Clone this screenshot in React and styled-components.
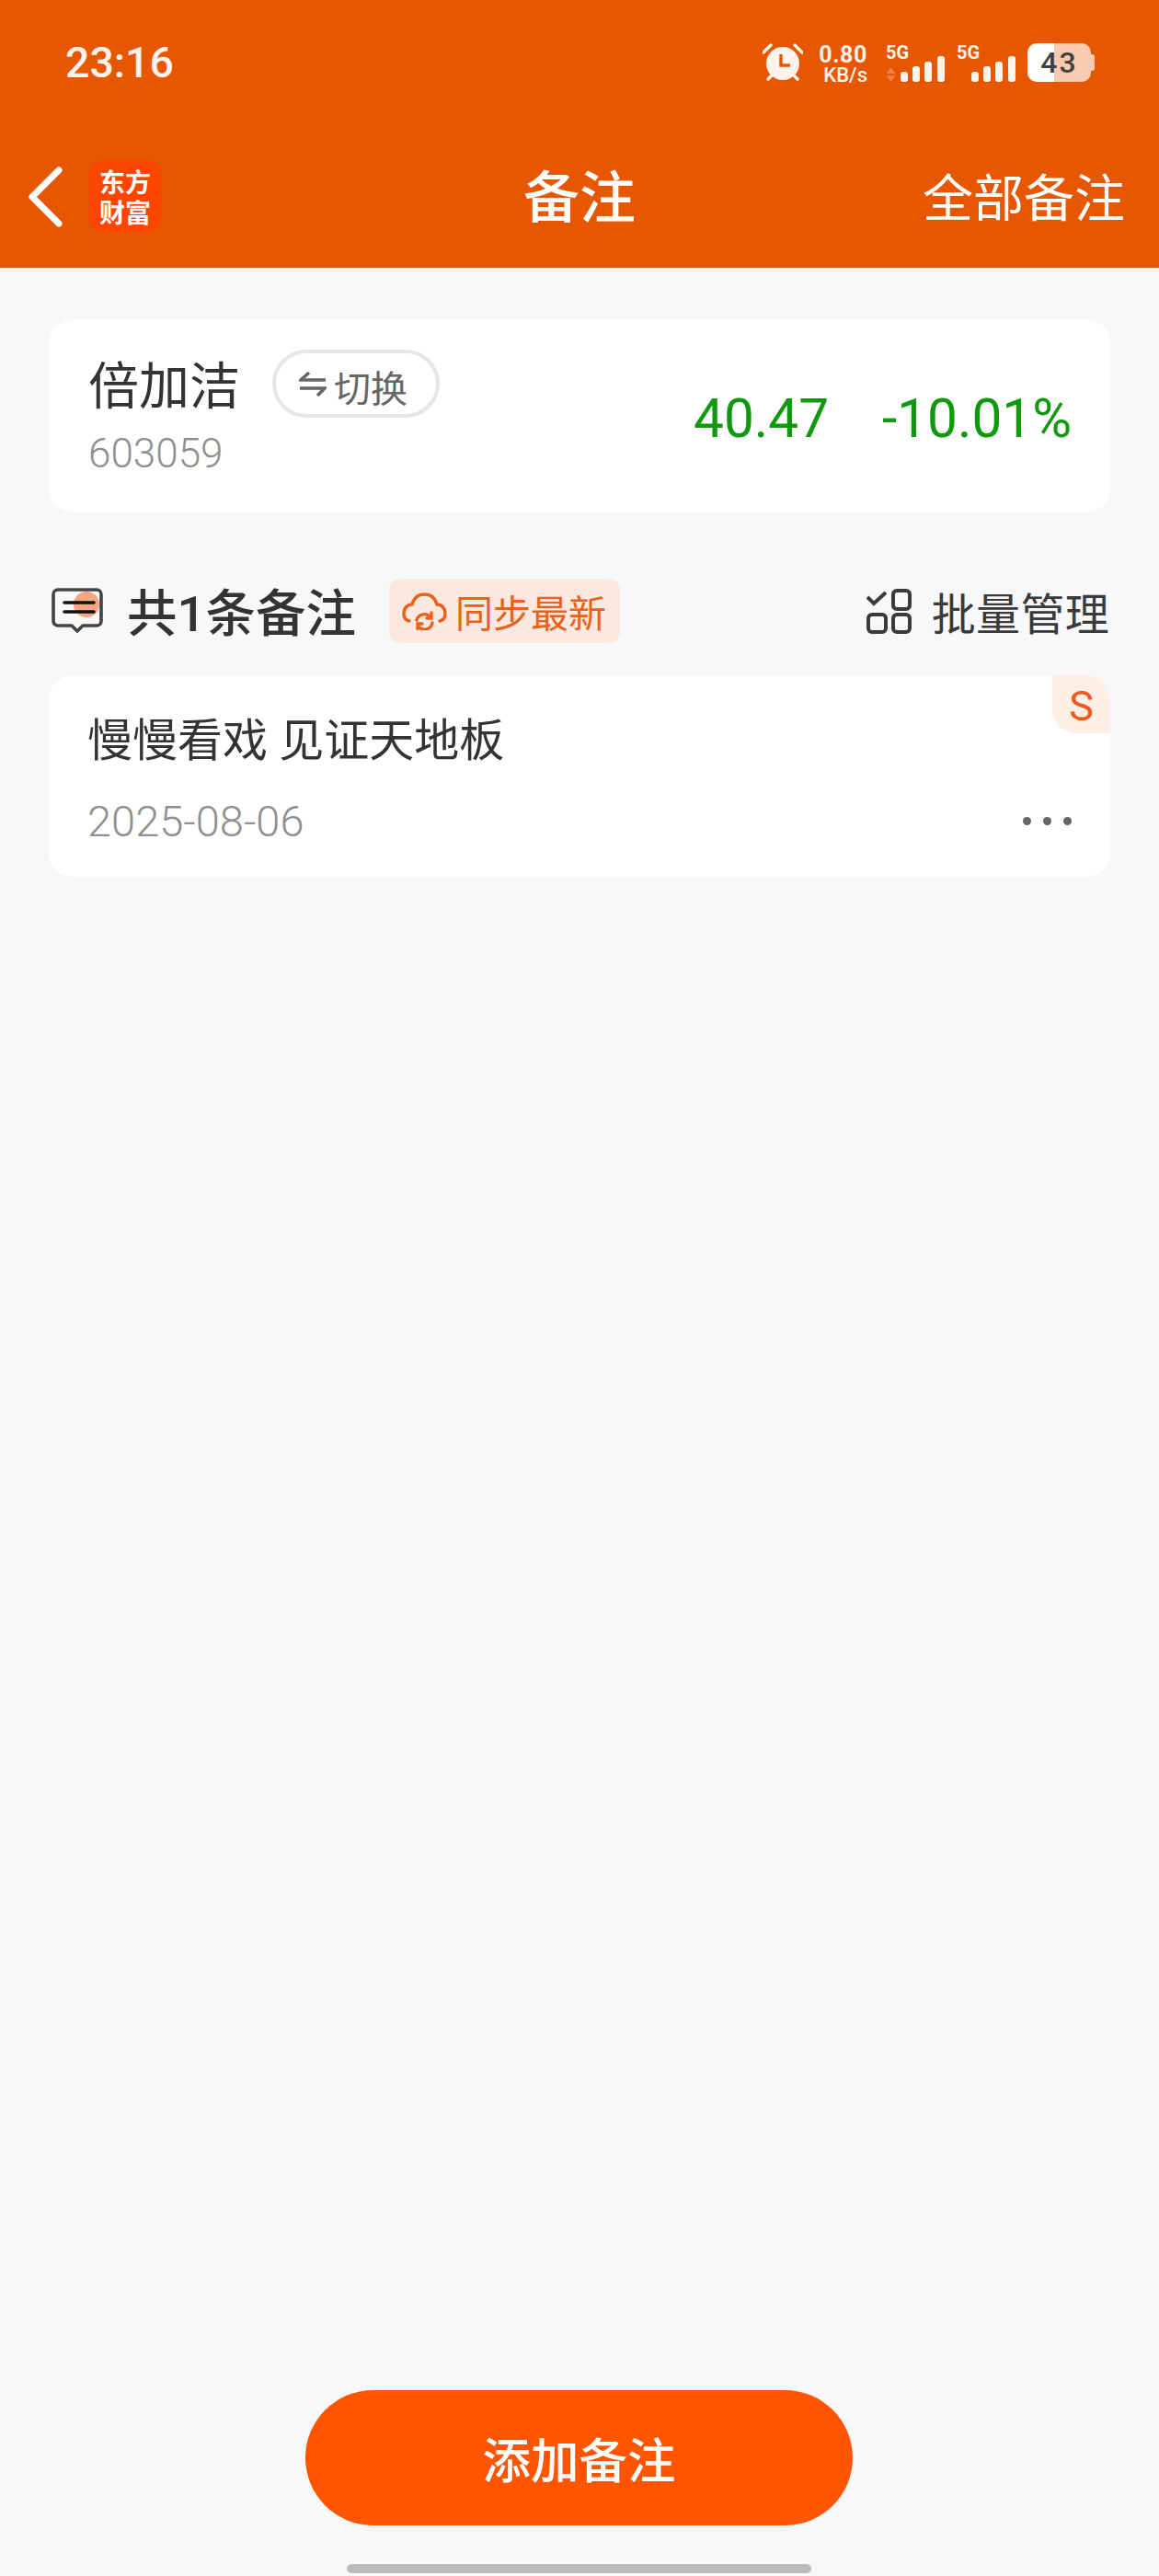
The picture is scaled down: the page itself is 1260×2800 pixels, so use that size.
import React from "react";
import styled, { createGlobalStyle } from "styled-components";

const Global = createGlobalStyle`
  html, body { margin: 0; padding: 0; background: #f8f8fa; }
  * { box-sizing: border-box; }
  body { font-family: Roboto, "Noto Sans CJK SC", sans-serif; }
`;

const Page = styled.div`
  width: 1260px;
  height: 2800px;
  display: flex;
  flex-direction: column;
  background: #f8f8fa;
  color: #333;
`;
const Header = styled.header`
  height: 291px;
  background: #e75600;
  color: #fff;
  flex: none;
`;
const StatusBar = styled.div`
  height: 136px;
  display: flex;
  align-items: center;
  padding: 0 70px 0 71px;
  color: #fff3ec;
`;
const Time = styled.div`
  font-size: 46.5px;
  font-weight: 500;
  line-height: 1;
`;
const StatusIcons = styled.div`
  margin-left: auto;
  display: flex;
  align-items: center;
`;
const Speed = styled.div`
  width: 54px;
  margin-left: 16px;
  display: flex;
  flex-direction: column;
  align-items: flex-end;
  font-weight: 700;
`;
const SpeedValue = styled.span`
  font-size: 25px;
  line-height: 27px;
  letter-spacing: 0.6px;
`;
const SpeedUnit = styled.span`
  font-size: 22px;
  font-weight: 500;
  line-height: 17px;
`;
const Signal = styled.div`
  height: 42px;
  margin-left: ${(p) => p.$gap}px;
  width: 64px;
  position: relative;
`;
const SignalLabel = styled.span`
  display: block;
  font-size: 20px;
  font-weight: 700;
  line-height: 20px;
`;
const Bars = styled.svg`
  display: block;
  position: absolute;
  right: 0;
  bottom: 0;
`;
const Arrows = styled.svg`
  display: block;
  position: absolute;
  left: 0;
  bottom: 0;
`;
const Battery = styled.div`
  margin-left: 13px;
  display: flex;
  align-items: center;
`;
const BatteryBody = styled.div`
  width: 69px;
  height: 42px;
  border-radius: 10px;
  background: linear-gradient(90deg, #ffffff 0 29px, #f8cbb0 29px 100%);
  color: #404040;
  font-size: 32px;
  font-weight: 500;
  line-height: 42px;
  letter-spacing: 2px;
  text-align: center;
`;
const BatteryCap = styled.div`
  width: 4px;
  height: 18px;
  border-radius: 0 3px 3px 0;
  background: #f8cbb0;
`;
const Nav = styled.nav`
  height: 155px;
  display: grid;
  grid-template-columns: 1fr auto 1fr;
  align-items: center;
`;
const NavLeft = styled.div`
  display: flex;
  align-items: center;
  gap: 27px;
  padding-left: 30px;
`;
const Logo = styled.div`
  width: 78px;
  height: 79px;
  padding-top: 4px;
  border-radius: 16px;
  background: #fc4600;
  color: #fff;
  font-size: 28px;
  font-weight: 700;
  line-height: 33px;
  text-align: center;
  display: flex;
  flex-direction: column;
  justify-content: center;
`;
const NavTitle = styled.h1`
  margin: 0;
  padding-top: 5px;
  font-size: 61px;
  font-weight: 500;
  line-height: 1;
`;
const NavAction = styled.div`
  justify-self: end;
  padding: 5px 37px 0 0;
  font-size: 55px;
  font-weight: 400;
  line-height: 1;
`;
const Main = styled.main`
  flex: 1;
  padding: 56px 53px 0;
`;
const StockCard = styled.section`
  height: 210px;
  background: #fff;
  border-radius: 26px;
  display: flex;
  align-items: flex-start;
  justify-content: space-between;
  padding: 33px 42px 0 43px;
`;
const StockInfo = styled.div`
  display: flex;
  flex-direction: column;
`;
const NameRow = styled.div`
  display: flex;
  align-items: center;
  gap: 35px;
  height: 74px;
`;
const StockName = styled.div`
  padding-top: 6px;
  font-size: 55px;
  line-height: 1;
  color: #333;
`;
const SwitchPill = styled.div`
  height: 74px;
  width: 182px;
  border: 4px solid #e6e6e6;
  border-radius: 37px;
  display: flex;
  align-items: center;
  padding-left: 25px;
  gap: 8px;
  font-size: 40px;
  color: #666;
`;
const SwitchLabel = styled.span`
  padding-top: 5px;
`;
const StockCode = styled.div`
  margin-top: 17px;
  font-size: 44px;
  line-height: 44px;
  font-weight: 300;
  color: #8f8f8f;
`;
const Quote = styled.div`
  display: flex;
  gap: 58px;
  margin-top: 45px;
  font-size: 58.5px;
  line-height: 60px;
  color: #0e990e;
`;
const ListHead = styled.div`
  margin-top: 72px;
  height: 70px;
  display: flex;
  align-items: center;
  padding-left: 3px;
`;
const ListTitle = styled.h2`
  margin: 0 0 0 26px;
  padding-top: 6px;
  font-size: 54.5px;
  font-weight: 500;
  line-height: 1;
  color: #333;
`;
const SyncBadge = styled.div`
  margin-left: 36px;
  height: 70px;
  width: 251px;
  border-radius: 12px;
  background: #fbe8e0;
  color: #e9611a;
  display: flex;
  align-items: center;
  padding-left: 14px;
  gap: 9px;
  font-size: 41px;
`;
const BatchAction = styled.div`
  margin-left: auto;
  margin-right: 1px;
  display: flex;
  align-items: center;
  gap: 22px;
  font-size: 48px;
  letter-spacing: 0.3px;
  color: #3a3a3a;
`;
const NoteCard = styled.article`
  position: relative;
  margin-top: 35px;
  height: 219px;
  background: #fff;
  border-radius: 26px;
  padding: 42px 42px 0 42px;
`;
const CornerTag = styled.div`
  position: absolute;
  top: 0;
  right: 0;
  width: 63px;
  height: 63px;
  padding-top: 2px;
  border-radius: 0 26px 0 26px;
  background: #fdeee6;
  color: #f0591a;
  font-size: 45px;
  line-height: 63px;
  text-align: center;
`;
const NoteText = styled.p`
  margin: 0;
  font-size: 49px;
  line-height: 60px;
  color: #333;
`;
const NoteMeta = styled.div`
  margin-top: 31px;
  height: 50px;
  display: flex;
  align-items: center;
  justify-content: space-between;
`;
const NoteDate = styled.div`
  font-size: 47px;
  font-weight: 300;
  color: #8f8f8f;
`;
const MoreDots = styled.div`
  display: flex;
  gap: 13px;
`;
const Dot = styled.span`
  width: 9px;
  height: 9px;
  border-radius: 50%;
  background: #666;
`;
const Footer = styled.footer`
  flex: none;
  display: flex;
  flex-direction: column;
  align-items: center;
  padding: 0 1px 3px 0;
`;
const AddButton = styled.button`
  width: 595px;
  height: 147px;
  padding: 0 0 2px;
  border: 0;
  border-radius: 74px;
  background: #ff5500;
  color: #fff;
  font-family: inherit;
  font-size: 52.5px;
  font-weight: 500;
`;
const HomeBar = styled.div`
  margin-top: 42px;
  width: 505px;
  height: 10px;
  border-radius: 5px;
  background: #bbb;
`;

const Alarm = () => (
  <svg width="44" height="42" viewBox="0 0 44 42">
    <circle cx="22" cy="22" r="18" fill="#fff3ec" />
    <path d="M1 10 L9 2 M43 10 L35 2 M6 39 L10 35 M38 39 L34 35" stroke="#fff3ec" strokeWidth="3.4" strokeLinecap="round" fill="none" />
    <path d="M20 12 V24 H30" stroke="#e75600" strokeWidth="3.4" fill="none" />
  </svg>
);
const BarSet = () => (
  <Bars width="48" height="28" viewBox="0 0 48 28">
    <rect x="0" y="17" width="8" height="11" rx="3" fill="#fff3ec" />
    <rect x="13" y="11" width="8" height="17" rx="3" fill="#fff3ec" />
    <rect x="26" y="6" width="8" height="22" rx="3" fill="#fff3ec" />
    <rect x="40" y="0" width="8" height="28" rx="3" fill="#fff3ec" />
  </Bars>
);
const Chevron = () => (
  <svg width="40" height="66" viewBox="0 0 40 66">
    <path d="M34 4 L5 33 L34 62" stroke="#fff" strokeWidth="7" strokeLinecap="round" strokeLinejoin="round" fill="none" />
  </svg>
);
const SwapIcon = () => (
  <svg width="30" height="28" viewBox="0 0 30 28">
    <path d="M29 10 H2 L11 2 M1 19 H28 L20 27" stroke="#666" strokeWidth="3.4" fill="none" />
  </svg>
);
const NoteIcon = () => (
  <svg width="56" height="50" viewBox="0 0 56 50" style={{ flex: "none" }}>
    <circle cx="38" cy="18" r="14" fill="#f8a581" />
    <path d="M7 2 H49 A5 5 0 0 1 54 7 V36 A5 5 0 0 1 49 41 H34 L28 47 L22 41 H7 A5 5 0 0 1 2 36 V7 A5 5 0 0 1 7 2 Z" stroke="#444" strokeWidth="3.6" fill="none" strokeLinejoin="round" />
    <path d="M14 16 H46 M14 26 H46" stroke="#111" strokeWidth="3.6" strokeLinecap="round" />
  </svg>
);
const CloudIcon = () => (
  <svg width="49" height="41" viewBox="0 0 49 41" style={{ flex: "none" }}>
    <g stroke="#e9611a" strokeWidth="3.4" fill="none" strokeLinecap="round">
      <path d="M8 31 C3 30 2 26 2 23 C2 17 6 13 11 13 C13 6 18 2 24.5 2 C31 2 36 6 38 13 C43 13 47 17 47 23 C47 26 46 30 41 31" />
      <path d="M16 30 A8.5 8.5 0 0 1 31 27 M32 22 V28 H27" />
      <path d="M33 33 A8.5 8.5 0 0 1 18 37 M17 39.5 V34 H22" />
    </g>
  </svg>
);
const GridCheckIcon = () => (
  <svg width="49" height="49" viewBox="0 0 49 49" style={{ flex: "none" }}>
    <g stroke="#3a3a3a" strokeWidth="4" fill="none">
      <path d="M1 9 L8 16 L21 4" />
      <rect x="29" y="2" width="18" height="20" rx="4" />
      <rect x="2" y="28" width="19" height="19" rx="4" />
      <rect x="29" y="28" width="18" height="19" rx="4" />
    </g>
  </svg>
);

export default function App() {
  return (
    <Page>
      <Global />
      <Header>
        <StatusBar>
          <Time>23:16</Time>
          <StatusIcons>
            <Alarm />
            <Speed>
              <SpeedValue>0.80</SpeedValue>
              <SpeedUnit>KB/s</SpeedUnit>
            </Speed>
            <Signal $gap={20}>
              <SignalLabel>5G</SignalLabel>
              <Arrows width="11" height="16" viewBox="0 0 11 16">
                <path d="M5.5 0 L10.5 7 H0.5 Z M0.5 9 H10.5 L5.5 16 Z" fill="#f47f45" />
              </Arrows>
              <BarSet />
            </Signal>
            <Signal $gap={13}>
              <SignalLabel>5G</SignalLabel>
              <BarSet />
            </Signal>
            <Battery>
              <BatteryBody>43</BatteryBody>
              <BatteryCap />
            </Battery>
          </StatusIcons>
        </StatusBar>
        <Nav>
          <NavLeft>
            <Chevron />
            <Logo>
              <span>东方</span>
              <span>财富</span>
            </Logo>
          </NavLeft>
          <NavTitle>备注</NavTitle>
          <NavAction>全部备注</NavAction>
        </Nav>
      </Header>
      <Main>
        <StockCard>
          <StockInfo>
            <NameRow>
              <StockName>倍加洁</StockName>
              <SwitchPill>
                <SwapIcon />
                <SwitchLabel>切换</SwitchLabel>
              </SwitchPill>
            </NameRow>
            <StockCode>603059</StockCode>
          </StockInfo>
          <Quote>
            <span>40.47</span>
            <span>-10.01%</span>
          </Quote>
        </StockCard>
        <ListHead>
          <NoteIcon />
          <ListTitle>共1条备注</ListTitle>
          <SyncBadge>
            <CloudIcon />
            同步最新
          </SyncBadge>
          <BatchAction>
            <GridCheckIcon />
            批量管理
          </BatchAction>
        </ListHead>
        <NoteCard>
          <CornerTag>S</CornerTag>
          <NoteText>慢慢看戏 见证天地板</NoteText>
          <NoteMeta>
            <NoteDate>2025-08-06</NoteDate>
            <MoreDots>
              <Dot />
              <Dot />
              <Dot />
            </MoreDots>
          </NoteMeta>
        </NoteCard>
      </Main>
      <Footer>
        <AddButton>添加备注</AddButton>
        <HomeBar />
      </Footer>
    </Page>
  );
}
